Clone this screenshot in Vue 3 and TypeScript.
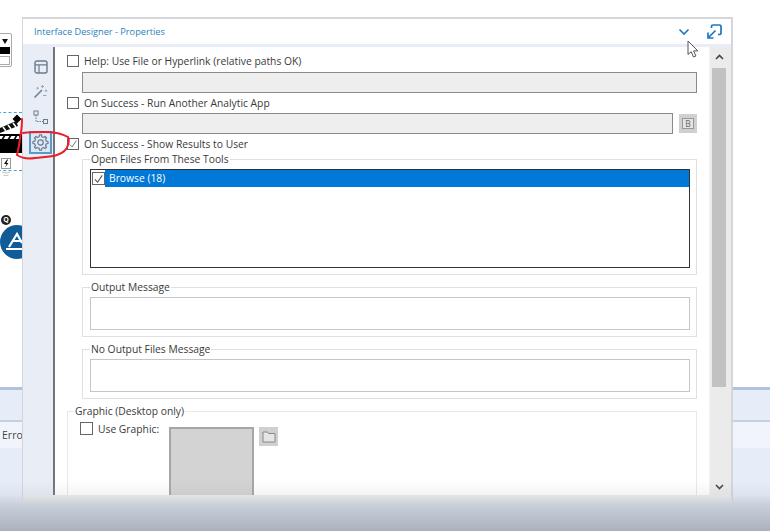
<script setup lang="ts">
const topFields = [
  { label: 'Help: Use File or Hyperlink (relative paths OK)', browse: false },
  { label: 'On Success - Run Another Analytic App', browse: true },
]
const messageGroups = ['Output Message', 'No Output Files Message']

function buildGear(cx: number, cy: number, outer: number, inner: number, teeth: number): string {
  const pts: string[] = []
  const step = (Math.PI * 2) / teeth
  for (let i = 0; i < teeth; i++) {
    const a = i * step - Math.PI / 2
    const offsets: Array<[number, number]> = [
      [-0.3, inner],
      [-0.17, outer],
      [0.17, outer],
      [0.3, inner],
    ]
    for (const [o, r] of offsets) {
      const t = a + o * step
      pts.push(`${(cx + Math.cos(t) * r).toFixed(2)} ${(cy + Math.sin(t) * r).toFixed(2)}`)
    }
  }
  return `M${pts.join('L')}Z`
}
const gearPath = buildGear(8.5, 8.5, 7.6, 5.9, 8)
</script>

<template>
  <div class="stage">
    <div class="canvas">
      <div class="dropdown-tool">
        <div class="dd-top"><span class="dd-arrow"></span></div>
        <div class="dd-black"></div>
        <div class="dd-white"></div>
      </div>
      <div class="selection">
        <svg class="clapper" width="24" height="44" viewBox="0 0 24 44">
          <path d="M0 15 L16 8 L18 13 L0 20Z" fill="#111" />
          <path d="M3 14l3 4M8 12l3 4M13 10l3 4" stroke="#fff" stroke-width="1.500" />
          <rect x="0" y="21" width="22" height="19" fill="#000" />
          <rect x="0" y="23" width="19" height="3" fill="#fff" />
          <path d="M5 22l-3 5M11 22l-3 5M17 22l-3 5" stroke="#000" stroke-width="1.500" />
          <path d="M17 1.500l4.500 4.500-4.500 4.500-4.500-4.500z" fill="#000" />
        </svg>
      </div>
      <svg class="bolt" width="12" height="24" viewBox="0 0 12 24">
        <rect x="1.500" y="1.500" width="9" height="10" fill="#fff" stroke="#999" />
        <path d="M7 2.500L4 7h2.500L5 10.500l3.500-4.500H6.500L8 2.500z" fill="#111" />
        <path d="M2 15q4 2 8 0M3.500 18q2.500 1.500 5 0" fill="none" stroke="#c2c2c2" />
      </svg>
      <div class="q-badge">Q</div>
      <svg class="app-logo" width="22" height="34" viewBox="0 0 22 34">
        <circle cx="17" cy="17" r="17" fill="#115b96" />
        <path d="M9 22L17 9l5 9M13 16h9M6 24h16" fill="none" stroke="#fff" stroke-width="2.200" />
      </svg>
    </div>

    <div class="status-band">
      <div class="band-row"></div>
      <div class="band-row errors">Errors</div>
      <div class="band-rest"></div>
    </div>

    <section class="window">
      <header class="titlebar">
        <span class="title">Interface Designer - Properties</span>
        <svg class="chev" width="12" height="8" viewBox="0 0 12 8">
          <path d="M1.500 1.500L6 6l4.500-4.500" fill="none" stroke="#1b78c4" stroke-width="1.600" />
        </svg>
        <svg class="popout" width="15" height="15" viewBox="0 0 15 15">
          <path d="M4.500 4V2.500a1.500 1.500 0 0 1 1.500-1.500h6.500a1.500 1.500 0 0 1 1.500 1.500V9a1.500 1.500 0 0 1-1.500 1.500H11" fill="none" stroke="#1b78c4" stroke-width="1.700" />
          <path d="M1 8.500V14h5.500M1.500 13.500L8.500 6.500" fill="none" stroke="#1b78c4" stroke-width="1.700" />
        </svg>
      </header>

      <div class="body">
        <nav class="rail">
          <button class="rail-btn">
            <svg width="14" height="14" viewBox="0 0 14 14">
              <rect x="1" y="1" width="12" height="12" rx="2" fill="none" stroke="#6a7c8e" stroke-width="1.400" />
              <path d="M1 4.800h12M5 4.800V13" fill="none" stroke="#6a7c8e" stroke-width="1.200" />
            </svg>
          </button>
          <button class="rail-btn">
            <svg width="15" height="15" viewBox="0 0 15 15">
              <path d="M1.500 13.500L9 6" stroke="#75869a" stroke-width="1.700" />
              <path d="M9.500 1v3M8 2.500h3M13 5.500v2.500M11.800 6.800h2.500M4.500 3v2.500M3.300 4.200h2.500M10 11.500h3.500" stroke="#9aa8b5" />
            </svg>
          </button>
          <button class="rail-btn">
            <svg width="15" height="15" viewBox="0 0 15 15">
              <rect x="1" y="1" width="4" height="4" fill="none" stroke="#6a7c8e" />
              <rect x="10.500" y="9.500" width="4" height="4" fill="none" stroke="#6a7c8e" />
              <path d="M3 5v6.500h7.500" fill="none" stroke="#6a7c8e" stroke-dasharray="1.500 1" />
            </svg>
          </button>
          <button class="rail-btn active">
            <svg width="17" height="17" viewBox="0 0 17 17">
              <path :d="gearPath" fill="none" stroke="#6a7c8e" stroke-width="1.200" stroke-linejoin="round" />
              <circle cx="8.500" cy="8.500" r="2.700" fill="none" stroke="#6a7c8e" stroke-width="1.200" />
            </svg>
          </button>
        </nav>

        <div class="content">
          <div class="form">
            <div v-for="f in topFields" :key="f.label" class="field">
              <label class="check-row"><span class="box"></span>{{ f.label }}</label>
              <div class="input-row">
                <div class="input"></div>
                <span v-if="f.browse" class="icon-btn b-btn">
                  <span class="b-inner">B</span>
                </span>
              </div>
            </div>

            <label class="check-row show-results">
              <span class="box">
                <svg width="12" height="12" viewBox="0 0 12 12"><path d="M2 6.500l3 3L10 2" fill="none" stroke="#777" stroke-width="1.200" /></svg>
              </span>
              On Success - Show Results to User
            </label>

            <div class="subgroups">
              <fieldset class="group files">
                <legend>Open Files From These Tools</legend>
                <div class="listbox">
                  <div class="list-row">
                    <span class="box small">
                      <svg width="12" height="12" viewBox="0 0 12 12"><path d="M2 6.500l3 3L10 2" fill="none" stroke="#555" stroke-width="1.200" /></svg>
                    </span>
                    <span class="selected">Browse (18)</span>
                  </div>
                </div>
              </fieldset>

              <fieldset v-for="g in messageGroups" :key="g" class="group message">
                <legend>{{ g }}</legend>
                <div class="msg-input"></div>
              </fieldset>
            </div>

            <fieldset class="group graphic">
              <legend>Graphic (Desktop only)</legend>
              <div class="graphic-row">
                <label class="check-row use-graphic"><span class="box"></span>Use Graphic:</label>
                <div class="preview"></div>
                <span class="icon-btn folder-btn">
                  <svg width="14" height="12" viewBox="0 0 14 12">
                    <path d="M1 11V1h4.500l1 1.500H13V11z" fill="#e6e6e6" stroke="#888" />
                  </svg>
                </span>
              </div>
            </fieldset>
          </div>

          <aside class="scrollbar">
            <svg class="sb-arrow" width="9" height="6" viewBox="0 0 9 6"><path d="M1 5l3.500-3.500L8 5" fill="none" stroke="#444" stroke-width="1.600" /></svg>
            <div class="thumb"></div>
            <svg class="sb-arrow down" width="9" height="6" viewBox="0 0 9 6"><path d="M1 1l3.500 3.500L8 1" fill="none" stroke="#444" stroke-width="1.600" /></svg>
          </aside>
        </div>
      </div>
    </section>

    <div class="fade"></div>

    <svg class="scribble" width="56" height="46" viewBox="0 0 56 46">
      <path d="M7 4 C7 12 6 18 5 24 C4 31 3 36 2 40 C8 44 14 44 20 43 C28 42 36 42 42 40 C48 38 52 34 53 30 C54 27 54 24 53 22 C46 18 38 17 30 17 C22 17 15 17 8 18" fill="none" stroke="#e8202a" stroke-width="2" stroke-linecap="round" />
    </svg>

    <svg class="cursor" width="14" height="19" viewBox="0 0 14 19">
      <path d="M1 1v13.500l3.200-2.800 2.300 5.300 2.400-1-2.300-5.100h4.200z" fill="#fff" stroke="#555" stroke-width="1" />
    </svg>
  </div>
</template>

<style>
html, body { margin: 0; background: #fff; }
</style>

<style scoped>
.stage {
  position: relative;
  width: 770px;
  height: 531px;
  overflow: hidden;
  background: #fff;
  font-family: "Open Sans", "Noto Sans", sans-serif;
  font-size: 10.3px;
  color: #3a3a3a;
}
.canvas { position: absolute; inset: 0 0 144px 0; }
.dropdown-tool {
  position: absolute; left: -6px; top: 33px; width: 18px; height: 34px;
  border: 1px solid #aaa; border-radius: 2px; padding: 1px 1px; box-sizing: border-box; background: #fff;
}
.dd-top { height: 12px; display: flex; justify-content: flex-end; align-items: center; padding-right: 2px; }
.dd-arrow { border: 3px solid transparent; border-top: 5px solid #111; border-bottom: 0; }
.dd-black { height: 7px; background: #000; }
.dd-white { height: 7px; margin-top: 2px; border: 1px solid #aaa; background: #fff; }
.selection {
  position: absolute; left: -2px; top: 112px; width: 24px; height: 57px;
  border-top: 1px dashed #4aa3d8; border-bottom: 1px dashed #4aa3d8;
}
.clapper { position: absolute; left: 2px; top: 0; }
.bolt { position: absolute; left: 0; top: 157px; }
.q-badge {
  position: absolute; left: 1px; top: 215px; width: 10px; height: 10px; border-radius: 50%;
  background: #222; color: #fff; font-size: 7px; line-height: 10px; text-align: center; font-weight: 700;
}
.app-logo { position: absolute; left: 0; top: 225px; }

.status-band {
  position: absolute; left: 0; right: 0; top: 387px; bottom: 0;
  display: flex; flex-direction: column; background: #e6edf8;
}
.band-row { height: 3px; background: #b0c3de; margin-bottom: 30px; flex: none; }
.band-row.errors {
  height: 28px; margin: 0; padding-left: 2px; box-sizing: border-box;
  border-top: 2px solid #c6d0de; background: #f1f4fa;
  line-height: 27px; font-size: 10.5px; color: #444;
}
.band-rest { flex: 1; background: #e6edf8; }

.window {
  position: absolute; left: 22px; top: 17px; width: 711px; height: 486px;
  box-sizing: border-box;
  border-style: solid; border-color: #d4d6d9 #d4d6d9 #eceef0;
  border-width: 2px 2px 8px 1px;
  background: #e8edf6;
  display: flex; flex-direction: column;
}
.titlebar {
  height: 25px; flex: none; background: #fff;
  display: flex; align-items: center; padding: 0 9px 0 11px; box-sizing: border-box;
}
.title { flex: 1; color: #2a7fc0; font-size: 9.2px; }
.chev { margin-right: 17px; }
.body { flex: 1; display: flex; min-height: 0; }
.rail {
  width: 30px; flex: none; box-sizing: border-box;
  display: flex; flex-direction: column; align-items: flex-start; padding: 11px 0 0 6px; gap: 2.4px;
}
.rail-btn {
  width: 23px; height: 23px; padding: 0; background: transparent; border: 1px solid transparent;
  display: flex; align-items: center; justify-content: center; box-sizing: border-box; flex: none;
}
.rail-btn.active { background: #dde8f6; border: 2px solid #5a9acb; }

.content {
  flex: 1; display: flex; min-width: 0; background: #fff; overflow: hidden;
  margin-top: 3px; border-left: 2px solid #70757c;
}
.form { width: 654px; flex: none; padding: 7px 0 0 12px; box-sizing: border-box; }
.field { margin-bottom: 3px; }
.field:first-child .input-row { margin-top: 5px; }
.check-row { display: flex; align-items: center; height: 13px; gap: 5px; }
.box {
  width: 12px; height: 12px; flex: none; box-sizing: border-box; border: 1px solid #666; background: #fff;
  display: inline-flex; align-items: center; justify-content: center;
}
.box.small { width: 13px; height: 13px; margin-top: 2px; }
.input-row { display: flex; gap: 6px; align-items: center; margin: 4px 0 0 15px; padding-right: 12px; }
.input { flex: 1; height: 21px; box-sizing: border-box; background: #eeeeee; border: 1px solid #8a8a8a; }
.icon-btn { flex: none; background: #d0d0d0; display: flex; align-items: center; justify-content: center; }
.b-btn { width: 18px; height: 19px; }
.b-inner {
  width: 12px; height: 11px; box-sizing: border-box; border: 1px solid #999; background: #e4e4e4;
  font-size: 8.5px; line-height: 9px; text-align: center; color: #666;
}
.show-results { margin-top: 1px; }
.subgroups { margin: 3px 0 0 15px; padding-right: 12px; }
.group { margin: 0; padding: 0; min-width: 0; border: 1px solid #e0e0e0; }
.group legend { margin-left: 0; padding: 0 1px; line-height: 13px; }
.files { height: 122px; padding: 3px 6px 0 7px; box-sizing: border-box; }
.listbox { height: 99px; box-sizing: border-box; border: 1px solid #333; background: #fff; padding: 0 0 0 1px; }
.list-row { display: flex; }
.selected { flex: 1; height: 17px; background: #0078d7; color: #fff; line-height: 16px; padding-left: 4px; }
.message { height: 56px; margin-top: 6px; padding: 3px 6px 0 7px; box-sizing: border-box; }
.msg-input { height: 33px; box-sizing: border-box; border: 1px solid #c6c6c6; background: #fff; }
.graphic { margin: 6px 12px 0 0; padding: 4px 12px 0; height: 130px; box-sizing: border-box; border-color: #e8e8e8; }
.group.graphic legend { margin-left: -6px; }
.graphic-row { display: flex; align-items: flex-start; }
.use-graphic { width: 89px; flex: none; gap: 5px; }
.use-graphic .box { width: 13px; height: 13px; }
.preview {
  width: 85px; height: 90px; flex: none; margin-top: 5px; box-sizing: border-box;
  background: #d3d3d3; border: 2px solid #a6a6a6;
}
.folder-btn { width: 19px; height: 19px; margin: 5px 0 0 5px; }

.scrollbar {
  flex: 1; background: #ebebeb; display: flex; flex-direction: column; align-items: center;
  border-left: 1px solid #f4f4f4; padding: 0 5px 0 2px; box-sizing: border-box;
}
.sb-arrow { margin-top: 7px; flex: none; }
.thumb { width: 100%; height: 319px; margin-top: 8px; background: #c2c2c2; flex: none; }
.sb-arrow.down { margin-top: auto; margin-bottom: 5px; }

.fade {
  position: absolute; left: 0; right: 0; bottom: 0; height: 51px; pointer-events: none;
  background: linear-gradient(to bottom, rgba(140,146,156,0) 0, rgba(140,146,156,.1) 15px, rgba(140,146,156,.33) 25px, rgba(140,146,156,.65) 100%);
}
.scribble { position: absolute; left: 15px; top: 115px; }
.cursor { position: absolute; left: 687px; top: 40px; }
</style>
